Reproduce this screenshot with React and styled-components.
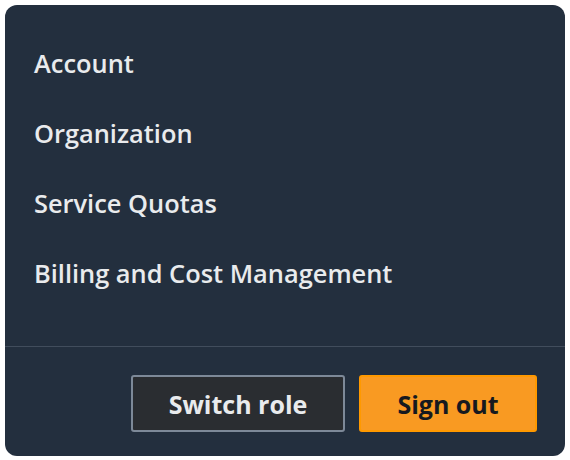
import React from "react";
import styled, { createGlobalStyle } from "styled-components";

const GlobalStyle = createGlobalStyle`
  html, body {
    margin: 0;
    padding: 0;
    background: #ffffff;
  }
  body {
    font-family: "Open Sans", "Noto Sans", Arial, sans-serif;
  }
`;

const Panel = styled.div`
  box-sizing: border-box;
  margin: 5px;
  width: 560px;
  height: 451px;
  background: #232f3e;
  border-radius: 12px;
  display: flex;
  flex-direction: column;
`;

const Menu = styled.ul`
  list-style: none;
  margin: 0;
  padding: 23px 0 38px 29px;
  display: flex;
  flex-direction: column;
`;

const MenuItem = styled.li`
  height: 70px;
  display: flex;
  align-items: center;
  color: #e9ebed;
  font-size: 25.4px;
  font-weight: 600;
  letter-spacing: 0;
`;

const Divider = styled.hr`
  margin: 0;
  border: none;
  height: 1px;
  background: #414d5c;
`;

const Footer = styled.div`
  display: flex;
  justify-content: flex-end;
  gap: 14px;
  padding: 28px 28px 24px;
`;

const Button = styled.button`
  box-sizing: border-box;
  height: 57px;
  width: ${({ $width }) => $width}px;
  padding: 0;
  font-family: inherit;
  font-size: 25px;
  font-weight: 700;
  border-radius: 3px;
  cursor: pointer;
  border: 2px solid ${({ $primary }) => ($primary ? "#ff9900" : "#7d8998")};
  background: ${({ $primary }) => ($primary ? "#f99a22" : "#2a2d31")};
  color: ${({ $primary }) => ($primary ? "#16191f" : "#e9ebed")};
`;

const items = ["Account", "Organization", "Service Quotas", "Billing and Cost Management"];

export default function App() {
  return (
    <>
      <GlobalStyle />
      <Panel>
        <Menu>
          {items.map((label) => (
            <MenuItem key={label}>{label}</MenuItem>
          ))}
        </Menu>
        <Divider />
        <Footer>
          <Button $width={214}>Switch role</Button>
          <Button $width={178} $primary>Sign out</Button>
        </Footer>
      </Panel>
    </>
  );
}
